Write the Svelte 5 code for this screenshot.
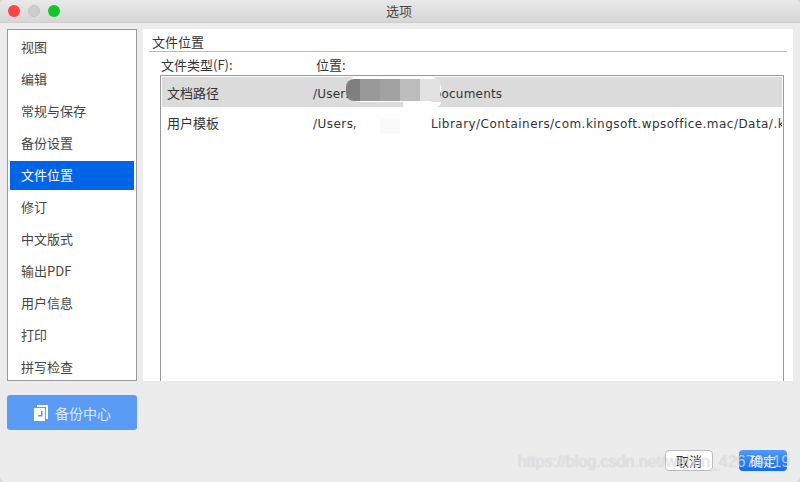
<script>
  const items = ['视图','编辑','常规与保存','备份设置','文件位置','修订','中文版式','输出PDF','用户信息','打印','拼写检查'];
</script>

<div class="window">
  <header class="titlebar">
    <div class="lights"><i class="red"></i><i class="gray"></i><i class="green"></i></div>
    <span class="title">选项</span>
  </header>
  <div class="main">
    <div class="left">
      <ul class="menu">
        {#each items as item}
          <li class:active={item === '文件位置'}>{item}</li>
        {/each}
      </ul>
      <button class="backup">
        <svg width="16" height="16" viewBox="0 0 16 16"><path d="M4 0H15V14H13V2H4Z" fill="#fff"/><path fill-rule="evenodd" d="M1 3H12V16H1ZM8 6V10H5V11.5H9.5V6Z" fill="#fff"/></svg>
        <span>备份中心</span>
      </button>
    </div>
    <section class="panel">
      <h2>文件位置</h2>
      <div class="cols"><span class="c1">文件类型(F):</span><span>位置:</span></div>
      <div class="table">
        <div class="row sel"><span class="c1">文档路径</span><span class="path first">/Users/<span class="gap"></span>Documents</span></div>
        <div class="row"><span class="c1">用户模板</span><span class="path">/Users/<span class="gap"></span>Library/Containers/com.kingsoft.wpsoffice.mac/Data/.kingsoft</span></div>
        <div class="mask m1"></div>
        <div class="mask m2"></div>
        <div class="mask m3"></div>
        <div class="mask m4"></div>
        <div class="mosaic"><i class="a"></i><i class="b"></i><i class="c"></i><i class="d"></i><i class="e"></i></div>
        <div class="faint"></div>
      </div>
    </section>
  </div>
  <footer class="actions">
    <button class="cancel">取消</button>
    <button class="ok">确定</button>
  </footer>
  <div class="mark">https://blog.csdn.net/weixin_42670419</div>
</div>

<style>
  :global(body) { margin: 0; background: #d4d4d4; }
  * { box-sizing: border-box; }
  .window {
    position: relative; width: 800px; height: 482px; overflow: hidden;
    background: #ececec; color: #333; border-radius: 5px;
    font: 13px "Noto Sans CJK SC", sans-serif;
  }
  .titlebar {
    position: relative; height: 23px; display: flex; align-items: center; justify-content: center;
    background: linear-gradient(#e9e9e9, #d6d6d6); border-bottom: 1px solid #cfcfcf;
    font-size: 13px; color: #444;
  }
  .title { margin-left: -2px; margin-top: -1px; }
  .lights { position: absolute; left: 8px; top: 5px; display: flex; gap: 8px; }
  .lights i { width: 12px; height: 12px; border-radius: 50%; display: block; }
  .red { background: #fc4444; } .gray { background: #cdcdcd; border: 1px solid #c0c0c0; } .green { background: #0dc82a; }
  .main { display: flex; padding: 6px 7px 0; gap: 6px; }
  .left { width: 130px; flex: none; }
  .menu {
    list-style: none; margin: 0; padding: 3px 2px 0; height: 352px; overflow: hidden;
    background: #fff; border: 1px solid #999;
  }
  .menu li { height: 29px; margin-bottom: 3px; padding-left: 11px; line-height: 28px; color: #444; }
  .menu li.active { background: #0064e6; color: #fff; }
  .backup {
    margin-top: 14px; width: 130px; height: 35px; display: flex; align-items: center; justify-content: center; gap: 6px;
    padding: 0; background: #5a9cf5; color: #dce9fd; border: none; border-radius: 3px;
    font: 14px "Noto Sans CJK SC", sans-serif;
  }
  .panel {
    width: 650px; height: 352px; overflow: hidden; background: #fff; padding: 3px 6px 0 6px;
    flex: none;
  }
  h2 { margin: 0; height: 20px; padding-left: 3px; line-height: 20px; font-weight: normal; font-size: 13px; border-bottom: 1px solid #bdbdbd; color: #333; }
  .cols { display: flex; height: 23px; line-height: 25px; padding-left: 12px; }
  .cols .c1 { width: 155px; }
  .table {
    position: relative; margin-left: 11px; width: 624px; height: 320px; border: 1px solid #999; padding: 1px;
    overflow: hidden; background: #fff;
  }
  .row { display: flex; height: 30px; align-items: center; padding-left: 5px; white-space: nowrap; overflow: hidden; }
  .row.sel { background: #dbdbdb; }
  .row .c1 { width: 146px; flex: none; }
  .path { font: 12px "DejaVu Sans", sans-serif; letter-spacing: .46px; color: #333; padding-top: 3px; }
  .path.first { letter-spacing: .2px; }
  .gap { display: inline-block; width: 73px; }
  .first .gap { width: 76px; }
  .mask { position: absolute; background: #fff; }
  .m1 { left: 185px; top: 0; width: 95px; height: 26px; border-radius: 13px; }
  .m2 { left: 242px; top: 26px; width: 38px; height: 5px; border-radius: 0 0 8px 0; }
  .m3 { left: 196px; top: 31px; width: 73px; height: 28px; border-radius: 0 0 14px 8px; }
  .m4 { left: 192px; top: 31px; width: 8px; height: 19px; }
  .mosaic { position: absolute; left: 185px; top: 3px; height: 22px; display: flex; overflow: hidden; border-radius: 8px 0 0 8px; }
  .mosaic i { display: block; height: 22px; width: 20px; }
  .mosaic .a { background: #7f7f7f; width: 14px; } .b { background: #999; } .c { background: #a2a2a2; } .d { background: #bcbcbc; } .e { background: #e2e2e2; }
  .faint { position: absolute; left: 219px; top: 43px; width: 20px; height: 15px; background: #fafafa; }
  .actions { position: absolute; right: 13px; bottom: 11px; display: flex; gap: 26px; }
  .actions button {
    width: 48px; height: 21px; border-radius: 4px; padding: 0; font: 13px/18px "Noto Sans CJK SC", sans-serif;
  }
  .cancel { background: #fff; border: 1px solid #bbb; color: #333; }
  .ok { background: linear-gradient(#4f9bf8, #0f6cf5); border: none; color: #fff; }
  .mark {
    position: absolute; left: 518px; top: 453px; white-space: nowrap; pointer-events: none;
    font: 16px "Liberation Sans", sans-serif; color: rgba(255,255,255,.6); text-shadow: 0 0 1px rgba(90,90,90,.4);
  }
</style>
